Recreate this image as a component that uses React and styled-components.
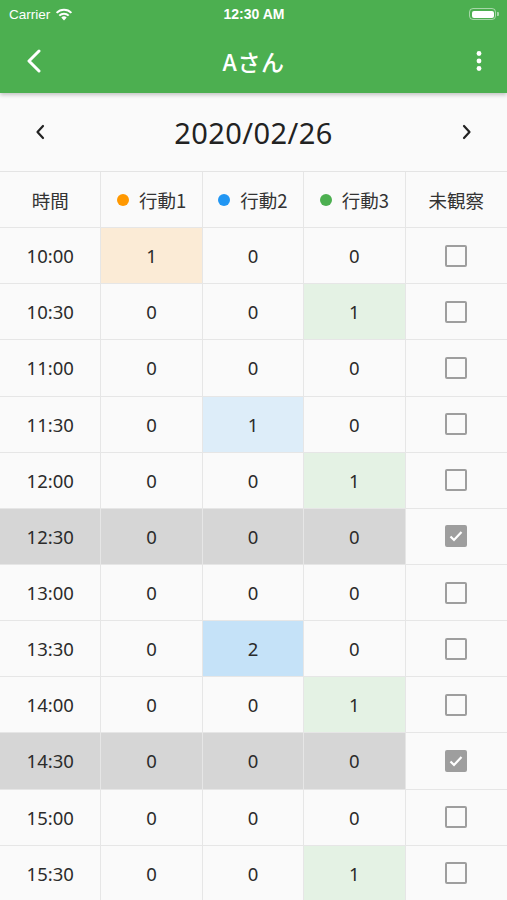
import React from 'react';
import styled, { createGlobalStyle } from 'styled-components';

const GlobalStyle = createGlobalStyle`
  html, body {
    margin: 0;
    padding: 0;
    background: #fafafa;
    font-family: "Noto Sans CJK JP", "Noto Sans", sans-serif;
  }
  * { box-sizing: border-box; }
`;

const GREEN = '#4caf50';

const Screen = styled.div`
  width: 507px;
  height: 900px;
  overflow: hidden;
  background: #fafafa;
`;

const Header = styled.header`
  background: ${GREEN};
  color: #fff;
  box-shadow: 0 2px 4px rgba(0, 0, 0, 0.22);
  position: relative;
  z-index: 1;
`;

const StatusBar = styled.div`
  height: 28px;
  display: grid;
  grid-template-columns: 1fr auto 1fr;
  align-items: center;
  padding: 0 8px 0 9px;
  font-family: "Liberation Sans", "Noto Sans", sans-serif;
`;

const Carrier = styled.div`
  display: flex;
  align-items: center;
  gap: 5px;
  font-size: 13.5px;
`;

const Clock = styled.div`
  font-size: 14px;
  font-weight: 700;
`;

const Battery = styled.div`
  justify-self: end;
  display: flex;
  align-items: center;
`;

const BatteryBody = styled.div`
  width: 27px;
  height: 12px;
  border: 1px solid rgba(255, 255, 255, 0.5);
  border-radius: 4px;
  padding: 1.5px;
  div {
    width: 100%;
    height: 100%;
    background: #fff;
    border-radius: 2px;
  }
`;

const BatteryCap = styled.div`
  width: 2px;
  height: 4px;
  margin-left: 1px;
  background: rgba(255, 255, 255, 0.5);
  border-radius: 0 1px 1px 0;
`;

const AppBar = styled.div`
  height: 65px;
  display: grid;
  grid-template-columns: 56px 1fr 56px;
  align-items: center;
`;

const IconButton = styled.div`
  display: flex;
  align-items: center;
  justify-content: ${(p) => p.$align || 'center'};
  padding-left: ${(p) => (p.$align ? '26px' : '0')};
  height: 100%;
`;

const Title = styled.h1`
  margin: 0;
  text-align: center;
  font-size: 23px;
  font-weight: 500;
  letter-spacing: 0.5px;
`;

const DateBar = styled.div`
  height: 79px;
  display: grid;
  grid-template-columns: 80px 1fr 80px;
  align-items: center;
  border-bottom: 1px solid #e4e4e4;
`;

const DateText = styled.div`
  text-align: center;
  font-family: "Noto Sans", sans-serif;
  font-size: 29px;
  color: #222;
  letter-spacing: 0.4px;
`;

const Chevron = styled.div`
  display: flex;
  justify-content: center;
`;

const Table = styled.div`
  display: grid;
  grid-template-columns: repeat(5, 1fr);
  grid-auto-rows: 56.15px;
`;

const Cell = styled.div`
  display: flex;
  align-items: center;
  justify-content: center;
  gap: 10px;
  border-right: 1px solid #e6e6e6;
  border-bottom: 1px solid #e6e6e6;
  background: ${(p) => p.$bg || 'transparent'};
  font-family: "Noto Sans", "Noto Sans CJK JP", sans-serif;
  font-size: 18.5px;
  color: #2b2b2b;
  &:nth-child(5n) {
    border-right: none;
  }
`;

const HeadCell = styled(Cell)`
  font-family: "Noto Sans CJK JP", sans-serif;
  font-size: 18.5px;
  color: #333;
`;

const Dot = styled.span`
  width: 12px;
  height: 12px;
  border-radius: 50%;
  background: ${(p) => p.$color};
`;

const Box = styled.div`
  width: 22px;
  height: 22px;
  border: 2px solid #9e9e9e;
  border-radius: 2px;
  background: ${(p) => (p.$checked ? '#9e9e9e' : 'transparent')};
  display: flex;
  align-items: center;
  justify-content: center;
`;

const tints = {
  a: { 1: '#fbebd6' },
  b: { 1: '#ddedf9', 2: '#c5e2f8' },
  c: { 1: '#e4f2e4' },
};

const rows = [
  ['10:00', 1, 0, 0, false],
  ['10:30', 0, 0, 1, false],
  ['11:00', 0, 0, 0, false],
  ['11:30', 0, 1, 0, false],
  ['12:00', 0, 0, 1, false],
  ['12:30', 0, 0, 0, true],
  ['13:00', 0, 0, 0, false],
  ['13:30', 0, 2, 0, false],
  ['14:00', 0, 0, 1, false],
  ['14:30', 0, 0, 0, true],
  ['15:00', 0, 0, 0, false],
  ['15:30', 0, 0, 1, false],
];

const Wifi = () => (
  <svg width="18" height="13" viewBox="0 0 18 13">
    <path d="M9 12.5 L6.3 9.6 a3.9 3.9 0 0 1 5.4 0 Z" fill="#fff" />
    <path d="M4.3 7.6 a6.7 6.7 0 0 1 9.4 0" stroke="#fff" strokeWidth="2" fill="none" />
    <path d="M1.6 4.9 a10.5 10.5 0 0 1 14.8 0" stroke="#fff" strokeWidth="2" fill="none" />
  </svg>
);

const App = () => (
  <Screen>
    <GlobalStyle />
    <Header>
      <StatusBar>
        <Carrier>
          Carrier <Wifi />
        </Carrier>
        <Clock>12:30 AM</Clock>
        <Battery>
          <BatteryBody>
            <div />
          </BatteryBody>
          <BatteryCap />
        </Battery>
      </StatusBar>
      <AppBar>
        <IconButton $align="flex-start">
          <svg width="16" height="24" viewBox="0 0 16 24">
            <path d="M13 2 L3 12 L13 22" stroke="#fff" strokeWidth="3" fill="none" strokeLinecap="round" strokeLinejoin="round" />
          </svg>
        </IconButton>
        <Title>Aさん</Title>
        <IconButton>
          <svg width="6" height="22" viewBox="0 0 6 22">
            <circle cx="3" cy="3.5" r="2.4" fill="#fff" />
            <circle cx="3" cy="11" r="2.4" fill="#fff" />
            <circle cx="3" cy="18.5" r="2.4" fill="#fff" />
          </svg>
        </IconButton>
      </AppBar>
    </Header>
    <DateBar>
      <Chevron>
        <svg width="10" height="16" viewBox="0 0 10 16">
          <path d="M8 2 L2.5 8 L8 14" stroke="#222" strokeWidth="2.2" fill="none" strokeLinecap="round" strokeLinejoin="round" />
        </svg>
      </Chevron>
      <DateText>2020/02/26</DateText>
      <Chevron>
        <svg width="10" height="16" viewBox="0 0 10 16">
          <path d="M2 2 L7.5 8 L2 14" stroke="#222" strokeWidth="2.2" fill="none" strokeLinecap="round" strokeLinejoin="round" />
        </svg>
      </Chevron>
    </DateBar>
    <Table>
      <HeadCell>時間</HeadCell>
      <HeadCell>
        <Dot $color="#ff9800" />行動1
      </HeadCell>
      <HeadCell>
        <Dot $color="#2196f3" />行動2
      </HeadCell>
      <HeadCell>
        <Dot $color="#4caf50" />行動3
      </HeadCell>
      <HeadCell>未観察</HeadCell>
      {rows.map(([time, a, b, c, checked]) => {
        const grey = checked ? '#d6d6d6' : undefined;
        return (
          <React.Fragment key={time}>
            <Cell $bg={grey}>{time}</Cell>
            <Cell $bg={grey || tints.a[a]}>{a}</Cell>
            <Cell $bg={grey || tints.b[b]}>{b}</Cell>
            <Cell $bg={grey || tints.c[c]}>{c}</Cell>
            <Cell>
              <Box $checked={checked}>
                {checked && (
                  <svg width="14" height="12" viewBox="0 0 14 12">
                    <path d="M1.5 6.5 L5 10 L12.5 2" stroke="#fff" strokeWidth="2.2" fill="none" />
                  </svg>
                )}
              </Box>
            </Cell>
          </React.Fragment>
        );
      })}
    </Table>
  </Screen>
);

export default App;
